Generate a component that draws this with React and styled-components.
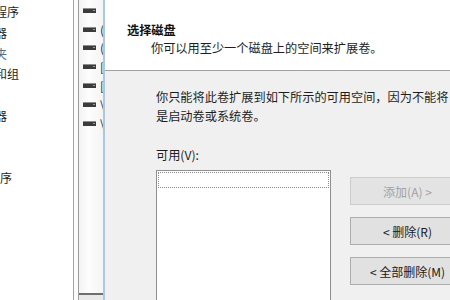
import React from "react";
import styled, { createGlobalStyle } from "styled-components";

const GlobalStyle = createGlobalStyle`
  html, body {
    margin: 0;
    padding: 0;
    overflow: hidden;
    background: #ffffff;
  }
  body {
    font-family: "Noto Sans CJK SC", "Noto Sans", "Liberation Sans", sans-serif;
    -webkit-font-smoothing: antialiased;
  }
`;

const Screen = styled.div`
  display: flex;
  width: 450px;
  height: 300px;
  overflow: hidden;
`;

/* left tree pane of the console, cut off at the screen edge */
const TreePane = styled.div`
  flex: 0 0 74px;
  background: #ffffff;
  border-right: 1px solid #a3a3a3;
  overflow: hidden;
  padding-top: 2px;
  box-sizing: border-box;
`;

const TreeRow = styled.div`
  height: 20.75px;
  line-height: 20.75px;
  font-size: 12px;
  white-space: nowrap;
  color: ${(p) => (p.$tint ? "#4b6f93" : "#1c1c1c")};
  margin-left: ${(p) => (p.$level === 1 ? "-72px" : "-53px")};
`;

const Splitter = styled.div`
  flex: 0 0 4px;
  background: #fbfbfb;
  border-right: 1px solid #9c9c9c;
`;

/* volume list column */
const VolumeColumn = styled.div`
  flex: 0 0 24px;
  display: flex;
  flex-direction: column;
  background: linear-gradient(to right, #f2f2f2, #fdfdfd 40%, #f4f4f4);
  border-right: 2px solid #a9c8e8;
  overflow: hidden;
  padding-top: 1px;
`;

const VolumeRow = styled.div`
  display: flex;
  align-items: center;
  flex: none;
  height: 18.8px;
  padding-left: 4px;
  gap: 4px;
  font-size: 12px;
  color: #2a2a2a;
  white-space: nowrap;

  & > * {
    flex: none;
  }
`;

const ColumnFoot = styled.div`
  margin-top: auto;
  flex: none;
  height: 5px;
  border-top: 2px solid #6e6e6e;
  background: #e9e9e9;
`;

const Dialog = styled.div`
  flex: 1;
  display: flex;
  flex-direction: column;
  background: #f0f0f0;
  min-width: 0;
  font-size: 12.2px;
  color: #1e1e1e;
`;

const Header = styled.div`
  flex: none;
  height: 71px;
  box-sizing: border-box;
  background: #ffffff;
  border-bottom: 1px solid #a0a0a0;
  padding: 21px 0 0 22px;
  line-height: 18px;
`;

const Title = styled.div`
  font-weight: 700;
  color: #111;
`;

const Subtitle = styled.div`
  margin-left: 24px;
  white-space: nowrap;
`;

const Body = styled.div`
  flex: 1;
  min-height: 0;
  padding: 17px 0 0 51px;
  display: flex;
  flex-direction: column;
`;

const Note = styled.div`
  flex: none;
  line-height: 18.5px;
  white-space: nowrap;
`;

const Label = styled.div`
  flex: none;
  margin-top: 21px;
  line-height: 18px;
`;

const PickRow = styled.div`
  display: flex;
  flex: none;
  gap: 19px;
  margin-top: 6px;

  & > * {
    flex: none;
  }
`;

const ListBox = styled.div`
  width: 175px;
  height: 160px;
  box-sizing: border-box;
  background: #ffffff;
  border: 1px solid #8f8f8f;
  padding: 1px;
`;

const FocusItem = styled.div`
  height: 16px;
  box-sizing: border-box;
  border: 1px dotted #8a8a8a;
`;

const ButtonStack = styled.div`
  display: flex;
  flex-direction: column;
  gap: 12px;
  margin-top: 7px;
`;

const Button = styled.div`
  width: 115px;
  height: 28px;
  box-sizing: border-box;
  display: flex;
  align-items: center;
  justify-content: center;
  font-size: 12px;
  white-space: nowrap;
  border: 1px solid ${(p) => (p.$disabled ? "#cdcdcd" : "#adadad")};
  background: ${(p) => (p.$disabled ? "#e3e3e3" : "#e1e1e1")};
  color: ${(p) => (p.$disabled ? "#a2a2a2" : "#1a1a1a")};
`;

const DriveIcon = () => (
  <svg width="13" height="5" viewBox="0 0 13 5">
    <rect x="0" y="0" width="13" height="5" fill="#3b3b3b" />
    <rect x="0" y="0" width="13" height="1" fill="#8d8d8d" />
    <rect x="10" y="2" width="2" height="1" fill="#9a9a9a" />
  </svg>
);

const treeItems = [
  { text: "任务计划程序", level: 2 },
  { text: "事件查看器", level: 2 },
  { text: "共享文件夹", level: 2, tint: true },
  { text: "本地用户和组", level: 2 },
  { text: "性能", level: 2 },
  { text: "设备管理器", level: 2 },
  { text: "存储", level: 1 },
  { text: "磁盘管理", level: 2 },
  { text: "服务和应用程序", level: 1 },
];

const volumes = ["", "(C:)", "(D:)", "[E:]", "[F:]", "\\\\?\\", "\\\\?\\"];

const App = () => (
  <>
    <GlobalStyle />
    <Screen>
      <TreePane>
        {treeItems.map((item) => (
          <TreeRow key={item.text} $level={item.level} $tint={item.tint}>
            {item.text}
          </TreeRow>
        ))}
      </TreePane>
      <Splitter />
      <VolumeColumn>
        {volumes.map((v, i) => (
          <VolumeRow key={i}>
            <DriveIcon />
            <span>{v}</span>
          </VolumeRow>
        ))}
        <ColumnFoot />
      </VolumeColumn>
      <Dialog>
        <Header>
          <Title>选择磁盘</Title>
          <Subtitle>你可以用至少一个磁盘上的空间来扩展卷。</Subtitle>
        </Header>
        <Body>
          <Note>你只能将此卷扩展到如下所示的可用空间，因为不能将</Note>
          <Note>是启动卷或系统卷。</Note>
          <Label>可用(V):</Label>
          <PickRow>
            <ListBox>
              <FocusItem />
            </ListBox>
            <ButtonStack>
              <Button $disabled>添加(A) &gt;</Button>
              <Button>&lt; 删除(R)</Button>
              <Button>&lt; 全部删除(M)</Button>
            </ButtonStack>
          </PickRow>
        </Body>
      </Dialog>
    </Screen>
  </>
);

export default App;
